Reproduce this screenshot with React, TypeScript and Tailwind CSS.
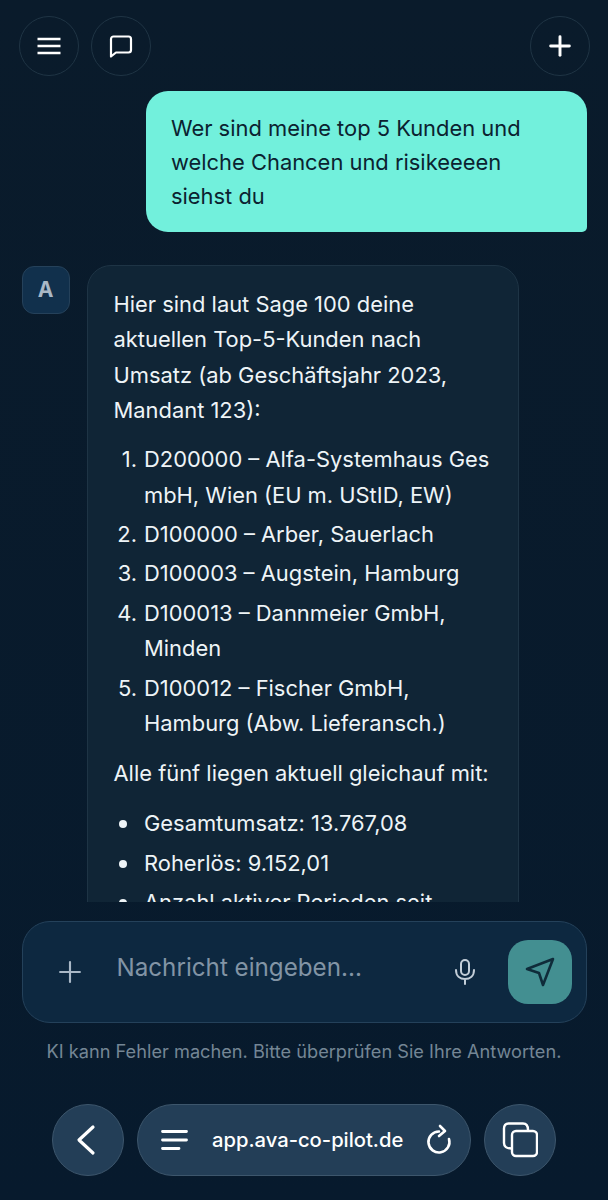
import type { ReactNode } from "react";
import { Plus } from "lucide-react";

const kunden = [
  ["D200000 – Alfa-Systemhaus Ges", "mbH, Wien (EU m. UStID, EW)"],
  ["D100000 – Arber, Sauerlach"],
  ["D100003 – Augstein, Hamburg"],
  ["D100013 – Dannmeier GmbH,", "Minden"],
  ["D100012 – Fischer GmbH,", "Hamburg (Abw. Lieferansch.)"],
];

const RoundButton = ({ children }: { children: ReactNode }) => (
  <button className="flex h-[60px] w-[60px] items-center justify-center rounded-full border border-[#1f3444] text-white">
    {children}
  </button>
);

export default function App() {
  return (
    <div className="flex h-[1200px] w-[608px] flex-col overflow-hidden bg-linear-to-b from-[#0a1b2b] to-[#071a2d] font-['Inter',sans-serif]">
      <div className="flex items-center justify-between pl-[19px] pr-[18px] pt-4">
        <div className="flex gap-3">
          <RoundButton>
            <svg width="24" height="18" viewBox="0 0 24 18" fill="none" stroke="currentColor" strokeWidth="2.4">
              <path d="M0.5 2H23.5M0.5 9H23.5M0.5 16H23.5" />
            </svg>
          </RoundButton>
          <RoundButton>
            <svg width="24" height="24" viewBox="0 0 24 24" fill="none" stroke="currentColor" strokeWidth="2.2" strokeLinejoin="round">
              <path d="M2 5a2.5 2.5 0 0 1 2.5-2.5h15A2.5 2.5 0 0 1 22 5v11a2.5 2.5 0 0 1-2.5 2.5H7L2 22.5z" />
            </svg>
          </RoundButton>
        </div>
        <RoundButton>
          <Plus className="h-8 w-8" strokeWidth={2.2} />
        </RoundButton>
      </div>

      <div className="flex h-[826px] flex-col overflow-hidden">
        <div className="ml-[146px] mt-[15px] w-[441px] shrink-0 rounded-[22px] rounded-br-[5px] bg-[#72f0dc] pb-[19px] pl-[25px] pr-4 pt-5 text-[21.9px] leading-[34px] text-[#0b2230]">
          Wer sind meine top 5 Kunden und
          <br />
          welche Chancen und risikeeeen
          <br />
          siehst du
        </div>

        <div className="ml-[22px] mt-[33px] flex items-start gap-[17px]">
          <div className="mt-px flex h-12 w-12 items-center justify-center rounded-[12px] border border-[#25415a] bg-[#11304c] pr-px text-[21px] font-bold text-[#a9b8c6]">
            A
          </div>
          <div className="w-[432px] shrink-0 rounded-t-[24px] border border-[#1e3445] bg-[#102536] pl-[25.5px] pr-4 pt-[21px] text-[21.9px] leading-[35.4px] text-[#eef4f7]">
            <p>
              Hier sind laut Sage 100 deine
              <br />
              aktuellen Top-5-Kunden nach
              <br />
              Umsatz (ab Geschäftsjahr 2023,
              <br />
              Mandant 123):
            </p>
            <ol className="mt-[13.6px] flex flex-col gap-1">
              {kunden.map((zeilen, i) => (
                <li key={i} className="flex">
                  <span className="w-[30.5px] shrink-0 pr-[7px] text-right">{i + 1}.</span>
                  <span>
                    {zeilen.map((z) => (
                      <span key={z} className="block whitespace-nowrap">{z}</span>
                    ))}
                  </span>
                </li>
              ))}
            </ol>
            <p className="mt-[14.6px]">Alle fünf liegen aktuell gleichauf mit:</p>
            <ul className="mt-[15px] flex flex-col gap-1">
              {["Gesamtumsatz: 13.767,08", "Roherlös: 9.152,01", "Anzahl aktiver Perioden seit"].map((t) => (
                <li key={t} className="flex items-center">
                  <span className="ml-[5px] mr-[17.5px] h-2 w-2 rounded-full bg-[#eef4f7]" />
                  {t}
                </li>
              ))}
            </ul>
          </div>
        </div>
      </div>

      <div className="ml-[22px] mr-[21px] mt-[19px] flex h-[102px] items-center rounded-[28px] border border-[#24415a] bg-[#0d2840] pl-[30px] pr-[14px]">
        <Plus className="h-[34px] w-[34px] text-[#a9b8c6]" strokeWidth={1.5} />
        <span className="-mt-[7px] ml-[29.5px] flex-1 text-[24.2px] text-[#8294a5]">Nachricht eingeben...</span>
        <svg className="mr-[31px] text-[#c3ced8]" width="24" height="26" viewBox="0 0 24 26" fill="none" stroke="currentColor" strokeWidth="2" strokeLinecap="round">
          <rect x="8" y="1" width="8" height="15" rx="4" />
          <path d="M3 11c0 6 4 9 9 9s9-3 9-9M12 20v5" />
        </svg>
        <button className="flex h-16 w-16 items-center justify-center rounded-[20px] bg-[#438f91] text-[#0f2c3a]">
          <svg width="32" height="32" viewBox="0 0 32 32" fill="none" stroke="currentColor" strokeWidth="2.6" strokeLinejoin="round">
            <path d="M29 3L3 13L15 17L19 29Z" />
          </svg>
        </button>
      </div>

      <p className="mt-[18px] text-center text-[18.2px] leading-5 text-[#748695]">
        KI kann Fehler machen. Bitte überprüfen Sie Ihre Antworten.
      </p>

      <div className="mt-[43px] flex items-center gap-[13px] pl-[52px]">
        <button className="flex h-[72px] w-[72px] items-center justify-center rounded-full border border-[#3d566c] bg-[#233e57] text-white">
          <svg className="mr-[5px]" width="20" height="32" viewBox="0 0 20 32" fill="none" stroke="currentColor" strokeWidth="3.2" strokeLinecap="round" strokeLinejoin="round">
            <path d="M17 3L3 16L17 29" />
          </svg>
        </button>
        <div className="flex h-[72px] w-[334px] items-center rounded-full border border-[#3d566c] bg-[#233e57] pl-[23px] pr-[17px] text-white">
          <svg width="27" height="22" viewBox="0 0 27 22" fill="none" stroke="currentColor" strokeWidth="2.8" strokeLinecap="round">
            <path d="M1.5 2.5H25.5M1.5 11H25.5M1.5 19.5H18" />
          </svg>
          <span className="ml-6 flex-1 text-[20.2px] font-medium">app.ava-co-pilot.de</span>
          <svg width="28" height="32" viewBox="0 0 28 32" fill="none" stroke="currentColor" strokeWidth="2.6" strokeLinecap="round" strokeLinejoin="round">
            <path d="M14 7.5A10.5 10.5 0 1 0 24 15M15 2L20 7L14 12" />
          </svg>
        </div>
        <button className="flex h-[72px] w-[72px] items-center justify-center rounded-full border border-[#3d566c] bg-[#233e57] text-white">
          <svg width="36" height="36" viewBox="0 0 36 36" fill="none" stroke="currentColor" strokeWidth="2.4" strokeLinejoin="round">
            <path d="M9.5 26.5Q2 26.5 2 21V6.5Q2 1.5 6.5 1.5H21Q26 1.5 26 8" />
            <rect x="10" y="9" width="25" height="25" rx="4" />
          </svg>
        </button>
      </div>
    </div>
  );
}
